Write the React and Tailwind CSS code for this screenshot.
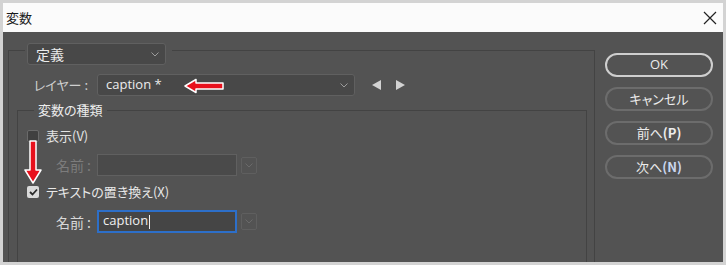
import React from "react";

const jp = {
  fontFamily: '"Noto Sans CJK JP", "Noto Sans", sans-serif',
  fontFeatureSettings: '"palt"',
};

const Chevron = ({ color = "#9c9c9c" }) => (
  <svg width="8" height="5" viewBox="0 0 8 5" className="shrink-0">
    <path d="M0.5 0.5 L4 4 L7.5 0.5" fill="none" stroke={color} strokeWidth="1" />
  </svg>
);

const Select = ({ children, width }) => (
  <div
    className={
      "h-[22px] flex items-center justify-between pl-[8px] pr-[6px] bg-[#484848] border border-[#606060] rounded-[3px] " +
      width
    }
  >
    {children}
    <Chevron />
  </div>
);

const Checkbox = ({ checked }) =>
  checked ? (
    <div className="w-[12px] h-[12px] rounded-[2px] bg-[#dadada] flex items-center justify-center">
      <svg width="9" height="8" viewBox="0 0 9 8">
        <path d="M1 4 L3.5 6.5 L8 1.5" fill="none" stroke="#2a2a2a" strokeWidth="1.8" />
      </svg>
    </div>
  ) : (
    <div className="w-[12px] h-[12px] rounded-[2px] bg-[#404040] border border-[#6a6a6a]" />
  );

const SmallButton = () => (
  <div className="w-[16px] h-[17px] ml-[4px] border border-[#5f5f5f] rounded-[2px] flex items-center justify-center">
    <Chevron color="#6a6a6a" />
  </div>
);

const NameRow = ({ disabled, value }) => (
  <div className="flex items-center">
    <div
      className={
        "w-[79px] text-right pr-[6px] text-[14px] leading-[20px] " +
        (disabled ? "text-[#7c7c7c]" : "text-[#d8d8d8]")
      }
    >
      名前 :
    </div>
    <div
      className={
        "w-[140px] flex items-center pl-[4px] " +
        (disabled
          ? "h-[22px] bg-[#4a4a4a] border border-[#606060]"
          : "h-[23px] bg-[#454545] border-2 border-[#2d6fc9]")
      }
    >
      {value && (
        <span className="text-[13px] text-[#f0f0f0] leading-none" style={{ fontFamily: '"Open Sans", sans-serif' }}>
          {value}
          <span className="inline-block w-px h-[14px] bg-[#f0f0f0] align-middle ml-px" />
        </span>
      )}
    </div>
    <SmallButton />
  </div>
);

const Button = ({ children, primary }) => (
  <div
    className={
      "h-[24px] rounded-full flex items-center justify-center text-[13px] text-[#ececec] " +
      (primary ? "border-2 border-[#cfcfcf]" : "border-2 border-[#6c6c6c]")
    }
  >
    {children}
  </div>
);

const LeftArrow = () => (
  <svg width="42" height="16" viewBox="0 0 42 16" className="absolute left-[183px] top-[78px]">
    <path
      d="M2 8 L13 1.5 L13 5 L40 5 L40 11 L13 11 L13 14.5 Z"
      fill="#e8101c"
      stroke="#ffffff"
      strokeWidth="1.5"
      strokeLinejoin="round"
    />
  </svg>
);

const DownArrow = () => (
  <svg width="20" height="46" viewBox="0 0 20 46" className="absolute left-[23px] top-[139px]">
    <path
      d="M10 44 L2 31 L7 31 L7 2 L13 2 L13 31 L18 31 Z"
      fill="#e8101c"
      stroke="#ffffff"
      strokeWidth="1.5"
      strokeLinejoin="round"
    />
  </svg>
);

export default function App() {
  return (
    <div className="relative w-[726px] h-[265px] bg-[#d3d3d3] p-[3px] overflow-hidden" style={jp}>
      <div className="h-[29px] bg-[#fbfbfb] flex items-center justify-between pl-[3px] pr-[6px]">
        <span className="text-[13px] text-[#1a1a1a]">変数</span>
        <svg width="14" height="14" viewBox="0 0 14 14">
          <path d="M1 1 L13 13 M13 1 L1 13" stroke="#222" strokeWidth="1.2" />
        </svg>
      </div>

      <div className="h-[230px] bg-[#535353] flex overflow-hidden">
        <div className="ml-[5px] mt-[18px] w-[587px] h-[260px] shrink-0 border border-[#434343]">
          <div className="ml-[16px] -mt-[8px] w-fit pl-[2px] pr-[6px] bg-[#535353]">
            <Select width="w-[139px]">
              <span className="text-[14px] text-[#ececec]">定義</span>
            </Select>
          </div>

          <div className="mt-[9px] flex items-center">
            <div className="w-[83px] text-right pr-[4px] text-[13px] text-[#cfcfcf]">レイヤー :</div>
            <div className="ml-[5px]">
              <Select width="w-[258px]">
                <span className="text-[13px] text-[#ececec]" style={{ fontFamily: '"Open Sans", sans-serif' }}>
                  caption *
                </span>
              </Select>
            </div>
            <div className="ml-[17px] flex items-center gap-[15px]">
              <svg width="9" height="10" viewBox="0 0 9 10">
                <path d="M0 5 L9 0 L9 10 Z" fill="#d2d2d2" />
              </svg>
              <svg width="9" height="10" viewBox="0 0 9 10">
                <path d="M9 5 L0 0 L0 10 Z" fill="#d2d2d2" />
              </svg>
            </div>
          </div>

          <fieldset className="mt-[4px] ml-[8px] w-[570px] h-[200px] border border-[#434343]">
            <legend className="ml-[16px] px-[4px] text-[13px] leading-[20px] text-[#ececec]">変数の種類</legend>

            <div className="mt-[6px] pl-[9px] h-[20px] flex items-center gap-[7px]">
              <Checkbox />
              <span className="text-[13px] text-[#e4e4e4]">表示(V)</span>
            </div>

            <div className="mt-[8px]">
              <NameRow disabled />
            </div>

            <div className="mt-[6px] pl-[9px] h-[20px] flex items-center gap-[7px]">
              <Checkbox checked />
              <span className="text-[13px] text-[#e8e8e8]">テキストの置き換え(X)</span>
            </div>

            <div className="mt-[8px]">
              <NameRow value="caption" />
            </div>
          </fieldset>
        </div>

        <div className="ml-[10px] mt-[21px] w-[108px] flex flex-col gap-[10px]">
          <Button primary>
            <span style={{ fontFamily: '"Open Sans", sans-serif' }}>OK</span>
          </Button>
          <Button>キャンセル</Button>
          <Button>
            前へ<span className="font-semibold">(P)</span>
          </Button>
          <Button>
            次へ<span className="font-semibold text-[#c9d6ee]">(N)</span>
          </Button>
        </div>
      </div>

      <LeftArrow />
      <DownArrow />
    </div>
  );
}
